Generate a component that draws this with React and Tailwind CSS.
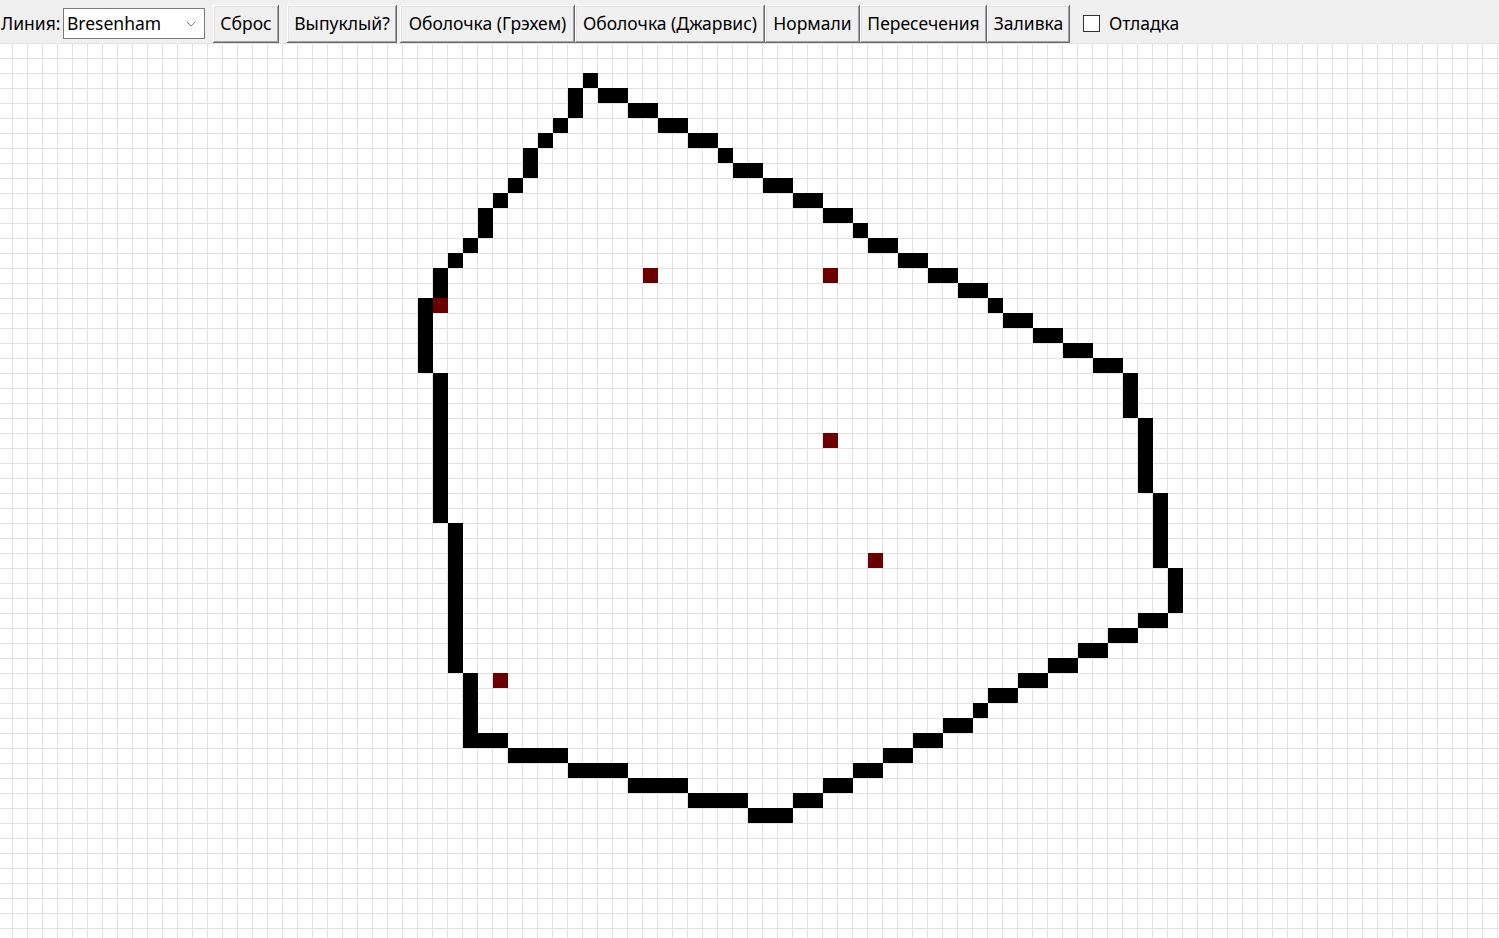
import { ChevronDown } from "lucide-react";

// cells as [col, row, w, h] on the 15px grid
const BLACK = [
  [39, 2, 1, 1],
  [38, 3, 1, 2],
  [40, 3, 2, 1],
  [42, 4, 2, 1],
  [44, 5, 2, 1],
  [46, 6, 2, 1],
  [48, 7, 1, 1],
  [49, 8, 2, 1],
  [51, 9, 2, 1],
  [53, 10, 2, 1],
  [55, 11, 2, 1],
  [57, 12, 1, 1],
  [58, 13, 2, 1],
  [60, 14, 2, 1],
  [62, 15, 2, 1],
  [64, 16, 2, 1],
  [66, 17, 1, 1],
  [67, 18, 2, 1],
  [69, 19, 2, 1],
  [71, 20, 2, 1],
  [73, 21, 2, 1],
  [75, 22, 1, 3],
  [76, 25, 1, 5],
  [77, 30, 1, 5],
  [78, 35, 1, 3],
  [76, 38, 2, 1],
  [74, 39, 2, 1],
  [72, 40, 2, 1],
  [70, 41, 2, 1],
  [68, 42, 2, 1],
  [66, 43, 2, 1],
  [65, 44, 1, 1],
  [63, 45, 2, 1],
  [61, 46, 2, 1],
  [59, 47, 2, 1],
  [57, 48, 2, 1],
  [55, 49, 2, 1],
  [53, 50, 2, 1],
  [50, 51, 3, 1],
  [46, 50, 4, 1],
  [42, 49, 4, 1],
  [38, 48, 4, 1],
  [34, 47, 4, 1],
  [31, 42, 1, 5],
  [32, 46, 2, 1],
  [30, 32, 1, 10],
  [29, 22, 1, 10],
  [28, 17, 1, 5],
  [29, 15, 1, 2],
  [30, 14, 1, 1],
  [31, 13, 1, 1],
  [32, 11, 1, 2],
  [33, 10, 1, 1],
  [34, 9, 1, 1],
  [35, 7, 1, 2],
  [36, 6, 1, 1],
  [37, 5, 1, 1],
];

const RED = [
  [43, 15],
  [55, 15],
  [29, 17],
  [55, 26],
  [58, 34],
  [33, 42],
];

const BUTTONS = [
  { label: "Выпуклый?", w: "w-[110px]" },
  { label: "Оболочка (Грэхем)", w: "w-[175px] ml-[3px]" },
  { label: "Оболочка (Джарвис)", w: "w-[190px]" },
  { label: "Нормали", w: "w-[95px]" },
  { label: "Пересечения", w: "w-[127px]" },
  { label: "Заливка", w: "w-[83px]" },
];

const btn =
  "h-[38px] bg-[#f0f0f0] text-black whitespace-nowrap shadow-[inset_-1px_-1px_#696969,inset_1px_1px_#ffffff,inset_-2px_-2px_#a0a0a0,inset_2px_2px_#e3e3e3]";

const Toolbar = () => (
  <div className="h-[43px] shrink-0 pt-[4px] bg-[#f0f0f0] flex items-center text-[17.5px] font-['Noto_Sans',sans-serif] text-black">
    <span className="w-[63px] pl-[1px]">Линия:</span>
    <div className="h-[31px] w-[142px] bg-white border border-[#7a7a7a] flex items-center justify-between pl-[3px] pr-[5px]">
      <span>Bresenham</span>
      <ChevronDown size={16} strokeWidth={1.3} className="text-[#666]" />
    </div>
    <button type="button" className={`${btn} ml-[8px] w-[66px]`}>
      Сброс
    </button>
    <div className="flex ml-[8px]">
      {BUTTONS.map((b) => (
        <button key={b.label} type="button" className={`${btn} ${b.w}`}>
          {b.label}
        </button>
      ))}
    </div>
    <label className="flex items-center ml-[13px] gap-[9px]">
      <span className="w-[17px] h-[17px] bg-white border border-[#333]" />
      <span>Отладка</span>
    </label>
  </div>
);

const Board = () => (
  <div className="flex-1 bg-white overflow-hidden">
    <svg width="1499" height="895" className="block">
      <defs>
        <pattern id="grid" width="15" height="15" patternUnits="userSpaceOnUse" x="-3" y="0">
          <rect width="1" height="15" fill="#e2e2e2" />
          <rect width="15" height="1" fill="#e2e2e2" />
        </pattern>
      </defs>
      <rect width="1499" height="895" fill="url(#grid)" />
      {BLACK.map(([i, j, w, h]) => (
        <rect
          key={`${i}-${j}`}
          x={15 * i - 2}
          y={15 * j}
          width={15 * w}
          height={15 * h}
          fill="#000"
        />
      ))}
      {RED.map(([i, j]) => (
        <rect key={`r${i}-${j}`} x={15 * i - 2} y={15 * j} width="15" height="15" fill="#6b0000" />
      ))}
    </svg>
  </div>
);

export default function App() {
  return (
    <div className="h-screen flex flex-col">
      <Toolbar />
      <Board />
    </div>
  );
}
